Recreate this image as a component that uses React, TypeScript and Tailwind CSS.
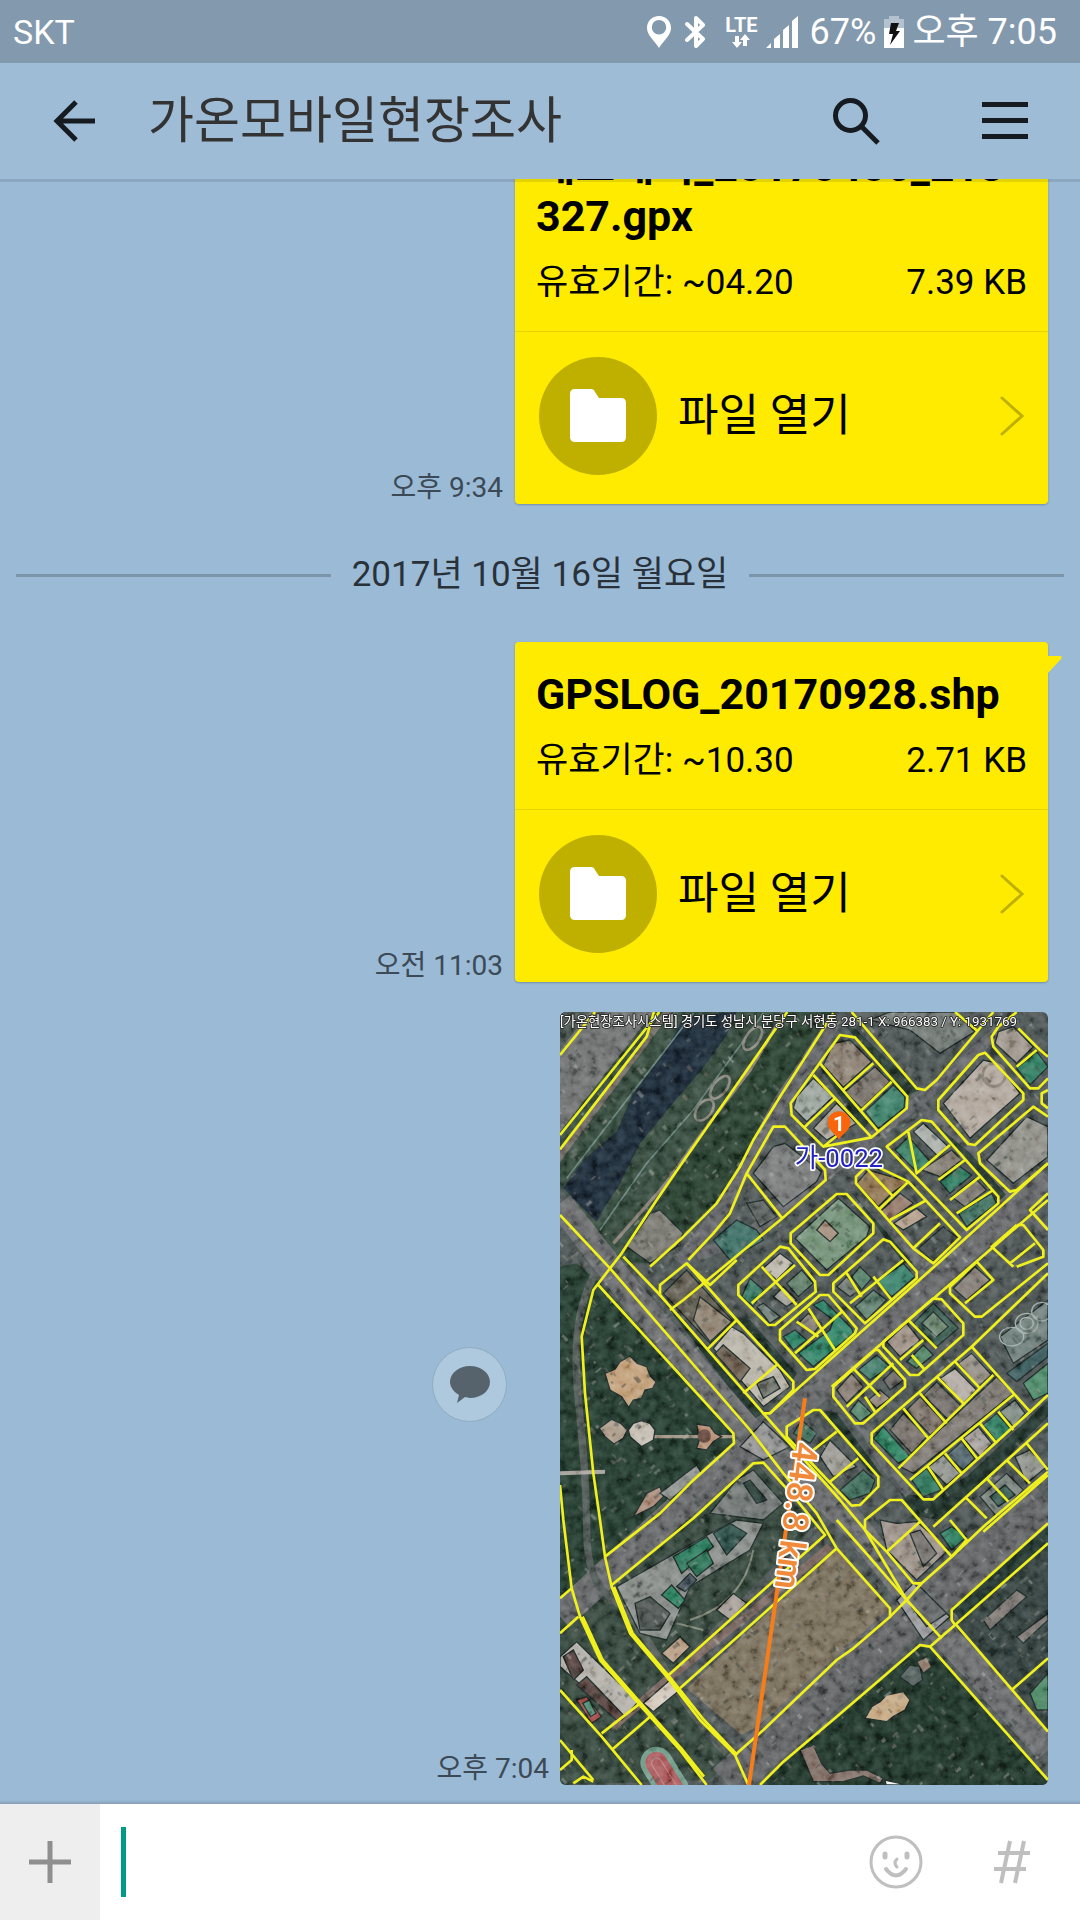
import { useState } from "react";

type FileMessageProps = {
  name: string;
  expires: string;
  size: string;
  time: string;
  tail?: boolean;
};

function StatusBar() {
  return (
    <div className="flex h-[63px] shrink-0 items-center justify-between bg-[#8399ad] pr-[23px] pl-[13px] leading-[40px] text-white">
      <span className="text-[34px]">SKT</span>
      <div className="flex items-center text-[36px]">
        <svg viewBox="0 0 24 32" className="mr-[14px] h-8 w-6" fill="#fff" aria-label="위치">
          <path
            fillRule="evenodd"
            d="M12 0C5 0 0 5 0 12c0 7 6 11 12 20 6-9 12-13 12-20C24 5 19 0 12 0Zm0 4a7 7 0 1 1 0 14.500A7 7 0 0 1 12 4Z"
          />
        </svg>
        <svg viewBox="0 0 22 34" className="mr-[18px] h-[34px] w-[22px]" fill="none" stroke="#fff" strokeWidth="4" strokeLinejoin="round" strokeLinecap="round" aria-label="블루투스">
          <path d="M2 9 18 24 11 31V3L18 10 2 25" />
        </svg>
        <span className="mr-2 flex flex-col items-center">
          <span className="text-[20px] leading-[18px] font-bold">LTE</span>
          <svg viewBox="0 0 18 14" className="h-[14px] w-[18px]" fill="#fff" aria-hidden="true">
            <path d="M3 2h4v6h3l-5 6-5-6h3ZM11 12h4V6h3l-5-6-5 6h3Z" />
          </svg>
        </span>
        <svg viewBox="0 0 32 32" className="mr-3 h-8 w-8" fill="#fff" aria-label="신호">
          <path d="M0 32 5 27v5ZM8 23l6-5v14H8ZM17 14l6-5v23h-6ZM26 5l6-5v32h-6Z" />
        </svg>
        <span>67%</span>
        <svg viewBox="0 0 20 32" className="mx-2 h-8 w-5" aria-label="배터리">
          <path d="M5 0h10v3h5v29H0V3h5Z" fill="#b4c2cf" />
          <path d="M0 12h20v20H0Z" fill="#fff" />
          <path d="M7 7h8l-3 8h4L6 29l3-11H5Z" fill="#111" />
        </svg>
        <span>오후 7:05</span>
      </div>
    </div>
  );
}

function Header() {
  return (
    <header className="flex h-[116px] shrink-0 items-center bg-[#9fbcd6] pr-[52px] pl-[53px]">
      <button type="button" aria-label="뒤로">
        <svg viewBox="0 0 42 42" className="h-[42px] w-[42px]" fill="none" stroke="#161b21" strokeWidth="5">
          <path d="M23 2 4 21l19 19M4 21h38" />
        </svg>
      </button>
      <h1 className="ml-[53px] flex-1 text-[50px] leading-[60px] text-[#333]">가온모바일현장조사</h1>
      <button type="button" aria-label="검색" className="mr-[102px]">
        <svg viewBox="0 0 47 48" className="h-12 w-[47px]" fill="none" stroke="#161b21" strokeWidth="5">
          <circle cx="17.500" cy="18.500" r="15" />
          <path d="M28 29 45 46" strokeWidth="5" />
        </svg>
      </button>
      <button type="button" aria-label="메뉴">
        <svg viewBox="0 0 46 38" className="h-[38px] w-[46px]" fill="#161b21">
          <path d="M0 0h46v5H0ZM0 16h46v5H0ZM0 32h46v5H0Z" />
        </svg>
      </button>
    </header>
  );
}

function FileMessage({ name, expires, size, time, tail }: FileMessageProps) {
  return (
    <article className="flex shrink-0 items-end justify-end gap-3 pr-8">
      <time className="text-[28px] leading-[32px] text-[#3c4a57]">{time}</time>
      <div className="relative w-[533px] rounded-[4px] bg-[#ffeb00] text-black shadow-[0_1px_2px_rgba(60,80,100,0.4)]">
        {tail && (
          <svg viewBox="0 0 14 18" className="absolute top-[14px] left-full h-[18px] w-[14px]" fill="#ffeb00" aria-hidden="true">
            <path d="M0 0h13q1 0 0 3L0 17Z" />
          </svg>
        )}
        <div className="border-b border-[#e6d400] px-[21px] pt-[27px] pb-7">
          <p className="text-[43px] leading-[50px] font-bold break-all">{name}</p>
          <div className="mt-[22px] flex justify-between text-[35px] leading-[40px]">
            <span>유효기간: ~{expires}</span>
            <span>{size}</span>
          </div>
        </div>
        <button type="button" className="flex h-[172px] w-full items-center px-6 pb-1 text-left">
          <svg viewBox="0 0 118 118" className="h-[118px] w-[118px]" aria-hidden="true">
            <circle cx="59" cy="59" r="59" fill="#bfb000" />
            <path d="M36 32h16q3 0 4 3l4 6h22q5 0 5 5v34q0 5-5 5H36q-5 0-5-5V37q0-5 5-5Z" fill="#fff" />
          </svg>
          <span className="ml-[21px] flex-1 text-[44px] leading-[48px]">파일 열기</span>
          <svg viewBox="0 0 24 40" className="h-10 w-6" fill="none" stroke="#bfb000" strokeWidth="3" strokeLinecap="round" aria-hidden="true">
            <path d="M2 2 22 20 2 38" />
          </svg>
        </button>
      </div>
    </article>
  );
}

function DateDivider({ children }: { children: string }) {
  return (
    <div className="flex h-[138px] shrink-0 items-center gap-[21px] px-4 pt-1">
      <span className="h-[3px] flex-1 bg-[#7b95aa]" />
      <span className="text-[35px] leading-[40px] text-[#29323a]">{children}</span>
      <span className="h-[3px] flex-1 bg-[#7b95aa]" />
    </div>
  );
}

/* Survey map: ground cover, roads and buildings under the parcel borders. */

const ground: [string, string][] = [
  ["#34493b", "30,36 860,36 690,290 600,470 490,620 300,790 180,790 30,560"],
  ["#6d6e6e", "30,80 60,36 310,36 30,395"],
  ["#4a5550", "30,36 120,36 30,150"],
  ["#6f6962", "30,450 340,36 365,36 30,485"],
  ["#1d2a37", "400,50 560,36 530,105 455,210 385,290 270,430 205,560 165,620 140,665 40,565 100,480 200,395 245,290 310,200 370,110"],
  ["#293f30", "712,36 850,36 690,290 600,470 490,610 390,710 310,650 375,520"],
  ["#243a2e", "30,800 80,790 150,850 550,1300 550,1330 250,1590 130,1700 30,1800"],
  ["#33443a", "30,1850 165,1670 290,1560 420,1560 620,1390 720,1500 800,1570 620,1750 350,2030 560,2260 480,2340 30,2355"],
  ["#786e5b", "860,1645 1020,1830 1015,1850 900,1950 620,2180 575,2205 410,2065"],
  ["#21352a", "630,2355 860,2150 1110,1940 1140,1945 1494,2345 1494,2355"],
  ["#33403d", "1215,1870 1494,1630 1494,2190"],
  ["#22342d", "1205,1830 1494,1570 1494,1625 1230,1860"],
  ["#27382f", "880,70 920,90 1110,270 1060,290"],
  ["#27382f", "1150,360 1260,440 1390,600 1340,600"],
  ["#22332c", "820,1230 860,1240 1000,1430 960,1420"],
  ["#22332c", "560,950 600,960 740,1120 725,1150"],
  ["#22332c", "330,890 480,1050 640,1240 610,1260"],
  ["#22332c", "1050,1480 1130,1490 1250,1430 1494,1200 1494,1250 1180,1560 1100,1550"],
  ["#22332c", "800,190 830,220 960,360 940,390"],
  ["#22332c", "900,570 960,640 1090,790 1060,790"],
];

const roads: [string, number, string][] = [
  ["#66686a", 80, "M30 610 240 880 620 1320 900 1560 1110 1825 1494 2250"],
  ["#626466", 84, "M30 1850 380 1530 610 1330 820 1150 1150 830 1494 530"],
  ["#5e6062", 120, "M530 2350 800 2100 1110 1825 1494 1500"],
  ["#606265", 44, "M850 70 690 310 590 500 500 650 390 790"],
  ["#606265", 34, "M440 770 600 700 820 530 1110 300 1350 90"],
  ["#606265", 34, "M850 400 1000 620 1110 790"],
  ["#5e6163", 34, "M840 1180 950 1290 1010 1400 1080 1480"],
  ["#5e6163", 26, "M1080 290 1150 350 1270 450 1390 590 1494 700"],
  ["#4e5753", 22, "M130 830Q60 960 85 1200T110 1590 180 1790 340 2000 530 2260"],
  ["#857c73", 10, "M690 60 600 210 470 380 340 560 190 730"],
  ["#658079", 5, "M430 40 50 535"],
  ["#658079", 5, "M640 40 430 330 290 490 150 690"],
  ["#75635c", 24, "M190 2180 350 2040 600 1840 840 1640"],
  ["#9b8f80", 10, "M310 1310H550"],
  ["#a4a09a", 12, "M30 1420 165 1415"],
  ["#7c8272", 6, "M380 1870 460 1890M420 1860Q580 1810 610 1650"],
];

const buildings: [string, string][] = [
  ["#8b7f72", "850,130 900,120 965,185 880,262 820,195"],
  ["#79736b", "975,200 1020,245 935,325 885,275"],
  ["#3f7f69", "1030,255 1065,290 1062,325 985,385 945,335"],
  ["#9ba49c", "790,235 850,290 770,365 730,325 740,290"],
  ["#a8a296", "860,310 920,370 830,420 790,385"],
  ["#777a79", "670,440 705,430 815,515 800,545 700,620 610,520"],
  ["#3d6d64", "490,720 560,660 620,690 640,720 540,780"],
  ["#595f5d", "590,610 640,600 680,650 630,680"],
  ["#6f7672", "960,60 1020,36 1215,36 1275,95 1170,160 1080,90"],
  ["#b0a69c", "1300,180 1340,190 1410,280 1260,415 1180,310"],
  ["#9c9389", "1345,95 1390,80 1450,140 1400,190 1335,130"],
  ["#2f7a5e", "1400,205 1460,155 1494,200 1440,255"],
  ["#8e8e87", "1430,350 1494,380 1494,470 1390,550 1310,480"],
  ["#3a7d64", "1075,410 1145,490 1100,515 1035,450"],
  ["#a9aea8", "1120,370 1195,440 1165,470 1090,395"],
  ["#827b71", "1205,450 1235,480 1170,530 1115,510"],
  ["#2f7a5f", "1230,500 1265,525 1200,580 1170,545"],
  ["#7b7770", "1275,535 1310,570 1245,620 1205,590"],
  ["#467464", "1325,580 1340,610 1250,680 1225,640"],
  ["#8f7552", "955,510 1075,545 1025,580 985,620 920,550"],
  ["#92796a", "1050,580 1090,610 1020,660 990,635"],
  ["#b39f8b", "1100,625 1130,650 1060,690 1030,670"],
  ["#454d4d", "1180,680 1225,715 1150,785 1105,745"],
  ["#718f75", "865,595 960,680 950,710 830,810 735,715"],
  ["#a38e7c", "825,660 865,700 840,725 800,690"],
  ["#3c7b65", "600,835 640,870 610,920 575,890"],
  ["#bcb6aa", "690,760 730,790 680,840 640,805"],
  ["#5e7b66", "755,810 790,850 745,890 710,850"],
  ["#9c9b95", "700,860 740,900 710,920 670,890"],
  ["#72817a", "640,910 690,950 660,970 620,920"],
  ["#2f8165", "820,900 905,985 910,1000 790,1100 745,1060 840,990 850,960 790,915"],
  ["#2f8165", "735,990 770,1020 730,1050 700,1010"],
  ["#837c72", "775,940 815,970 790,1000 745,970"],
  ["#747c76", "890,830 930,870 900,890 860,860"],
  ["#557f69", "930,800 965,835 935,870 905,830"],
  ["#3a806a", "1060,790 1095,830 1025,890 980,845"],
  ["#5d7c6b", "970,870 1010,900 950,960 915,920"],
  ["#3f5f53", "1150,910 1225,985 1160,1040 1090,970"],
  ["#69826c", "1150,935 1195,980 1160,1010 1115,970"],
  ["#9c8e83", "1070,970 1110,1020 1050,1070 1010,1025"],
  ["#518264", "1120,1035 1150,1065 1100,1105 1070,1085"],
  ["#837b74", "1275,800 1320,840 1250,900 1210,865"],
  ["#477d6b", "980,1065 1020,1100 960,1140 925,1110"],
  ["#857a70", "905,1120 940,1160 890,1210 860,1170"],
  ["#666360", "1030,1110 1060,1140 1020,1170 1000,1140"],
  ["#57846b", "925,1200 965,1240 930,1265 900,1235"],
  ["#948a80", "990,1170 1020,1195 980,1225 955,1200"],
  ["#2f8161", "1000,1280 1080,1370 1045,1390 970,1315"],
  ["#756e68", "1060,1240 1130,1310 1085,1360 1020,1290"],
  ["#7d7269", "1110,1190 1185,1270 1140,1305 1070,1230"],
  ["#706b66", "1160,1145 1240,1225 1195,1260 1120,1185"],
  ["#b2aba4", "1215,1105 1280,1170 1240,1210 1170,1135"],
  ["#938d84", "1265,1060 1325,1125 1285,1160 1225,1090"],
  ["#7c7771", "1340,1130 1390,1180 1090,1420 1050,1400"],
  ["#31755b", "1130,1405 1175,1470 1120,1490 1085,1440"],
  ["#8f918d", "1180,1365 1230,1420 1190,1455 1135,1400"],
  ["#52666e", "1235,1325 1275,1375 1240,1410 1190,1365"],
  ["#a49f9b", "1285,1280 1325,1330 1290,1370 1240,1315"],
  ["#327e62", "1340,1240 1385,1290 1340,1325 1300,1275"],
  ["#7f8b84", "1395,1200 1425,1240 1390,1280 1350,1235"],
  ["#6f7e7a", "1350,1010 1494,900 1494,1020 1390,1090"],
  ["#3b5a5b", "1370,1120 1494,1030 1494,1070 1400,1145"],
  ["#4b8867", "1420,1150 1494,1090 1494,1180 1450,1200"],
  ["#3d6a59", "755,1260 800,1300 780,1330 730,1300"],
  ["#9a9891", "840,1320 920,1400 850,1430 810,1370"],
  ["#3d6a59", "940,1410 975,1440 960,1480 900,1500 870,1470"],
  ["#5f5b4f", "410,810 550,965 480,1030 340,880"],
  ["#8d806f", "450,890 545,965 480,1025 430,960"],
  ["#b8b3a7", "545,980 580,1000 690,1110 720,1160 640,1220 490,1045"],
  ["#6d6052", "520,1035 600,1105 570,1145 495,1060"],
  ["#70746d", "620,1150 670,1130 690,1165 640,1195"],
  ["#c09e78", "165,1120 195,1108 210,1085 240,1068 262,1090 290,1100 302,1130 318,1145 308,1165 285,1170 275,1195 250,1200 236,1222 215,1190 180,1170"],
  ["#a99886", "148,1285 185,1258 212,1270 232,1290 220,1315 192,1332 165,1310"],
  ["#c4bdb1", "250,1270 275,1262 300,1270 315,1290 310,1320 275,1340 240,1310 235,1290"],
  ["#b68e74", "440,1272 480,1278 495,1300 515,1310 490,1325 470,1350 440,1345 448,1320"],
  ["#a98a78", "250,1550 290,1480 330,1460 340,1490 310,1520"],
  ["#8e9390", "330,1480 440,1395 455,1420 360,1500"],
  ["#6f7573", "560,1440 610,1410 700,1510 640,1560 480,1540"],
  ["#2b3f38", "580,1450 600,1440 650,1500 620,1510"],
  ["#858a87", "200,1760 480,1600 560,1560 640,1570 600,1650 420,1760 350,1920 270,1900"],
  ["#2d7a5d", "370,1670 470,1610 490,1640 395,1720"],
  ["#2f7358", "410,1690 470,1650 490,1690 440,1730"],
  ["#31534b", "490,1600 540,1570 590,1600 530,1665"],
  ["#47535c", "380,1760 420,1720 440,1740 405,1775"],
  ["#2f8262", "335,1785 365,1755 405,1800 385,1825"],
  ["#4f5552", "255,1810 300,1790 360,1840 330,1890 270,1890"],
  ["#b99d84", "335,1960 390,1910 420,1940 370,1990"],
  ["#a39b95", "500,1830 550,1780 590,1810 540,1860"],
  ["#d4c9bd", "280,2110 360,2040 390,2070 310,2135"],
  ["#b3b0a9", "30,1970 80,1925 265,2105 215,2160 30,2000"],
  ["#54403c", "110,2030 220,2145 205,2165 80,2055"],
  ["#54403c", "40,1970 70,1950 100,2010 70,2040"],
  ["#a04a44", "80,2100 110,2090 155,2150 125,2170"],
  ["#4f8a70", "98,2110 118,2100 138,2140 122,2150"],
  ["#9a9087", "990,1560 1040,1570 1100,1565 1195,1650 1100,1740 1010,1650"],
  ["#74706c", "1080,1600 1110,1590 1160,1660 1120,1700"],
  ["#2f7d5f", "1170,1600 1205,1580 1250,1610 1205,1650"],
  ["#c3a680", "945,2155 965,2120 990,2105 1010,2085 1060,2075 1080,2100 1065,2130 1030,2150 1010,2165"],
  ["#55625f", "1050,2030 1080,1995 1110,2000 1118,2040 1090,2060"],
  ["#8a7465", "1100,1985 1130,1970 1145,2000 1120,2020"],
  ["#806e65", "750,2250 790,2235 815,2290 840,2320 900,2310 950,2310 1000,2335 990,2350 940,2328 880,2345 790,2345"],
  ["#7a7470", "1300,1860 1400,1770 1430,1790 1320,1890"],
  ["#7a7470", "1400,1910 1494,1840 1494,1860 1420,1930"],
  ["#4a8562", "1440,2080 1494,2020 1494,2130 1460,2130"],
  ["#8f908f", "570,1340 640,1265 720,1340 640,1380"],
  ["#96979a", "1040,1800 1090,1750 1200,1850 1120,1920"],
  ["#626566", "1070,1800 1110,1760 1190,1840 1130,1880"],
  ["#77807a", "1290,1490 1370,1420 1420,1470 1340,1550"],
  ["#3c5c52", "1320,1490 1365,1455 1395,1485 1345,1520"],
  ["#8d9089", "1395,1370 1440,1350 1490,1400 1430,1450"],
  ["#77776f", "300,640 330,630 400,700 380,740 300,790 230,740"],
  ["#f3f3f3", "1005,2340 1070,2355 1008,2355"],
];

const parcels: string[] = [
  "M30 165 135 36M30 405 328 36M30 448 290 110 312 36",
  "M712 36 375 520 320 600 215 760 180 805",
  "M850 40 690 290 610 420 570 500 500 610 400 710 300 800",
  "M905 36 1100 265 1125 270 1160 240 1285 90 1330 36M1215 36 1285 95",
  "M870 105 915 112 1072 290 1070 325 965 412 820 440 725 345 722 310ZM810 190 985 395M790 225 965 412M970 190 880 270M1025 245 935 330M855 295 765 380M870 400 820 440",
  "M670 380 705 380 825 510 827 540 697 655 590 520ZM670 380 590 520 540 640 490 700 415 780M697 655 400 900 360 930",
  "M1305 158 1420 280 1420 300 1275 435 1255 432 1165 330 1165 300 1285 165Z",
  "M1400 36 1345 80 1325 110 1330 140 1440 265 1465 265 1494 235M1400 200 1460 150M1405 85 1470 150 1494 170M1494 270 1475 280 1475 310 1494 325",
  "M1494 350 1450 320 1285 460 1290 490 1380 575 1400 570 1494 490",
  "M1115 360 1145 365 1345 590 1345 610 1250 690 1010 440ZM1200 435 1100 520 1075 395M1245 480 1165 540M1290 530 1200 600M1330 570 1220 640",
  "M960 490 918 530 918 550 1090 745 1150 790 1230 712 1075 545ZM945 500 1030 590M1075 545 985 630M1130 600 1020 660M1170 670 1090 745",
  "M860 582 890 582 970 670 970 700 835 825 810 825 722 730 722 700Z",
  "M690 740 715 745 795 845 797 875 675 975 655 975 565 885 565 855ZM635 800 740 915M605 910 735 795",
  "M810 885 835 885 920 985 915 1000 795 1107 770 1110 690 1020 690 990ZM775 925 855 1050M740 965 805 1010M875 935 735 1060",
  "M1000 718 1020 725 1100 815 1100 835 945 970 850 875 850 850ZM890 820 935 890M970 830 1025 900M1060 780 900 910",
  "M1150 895 1175 898 1240 970 1240 1005 1105 1125 1080 1125 1000 1040 1000 1025ZM1075 960 1160 1045M1120 1020 1050 1080M1085 1065 1125 1110",
  "M1280 785 1200 860 1200 880 1275 950 1295 950 1494 790M1280 785 1330 840 1245 910",
  "M1400 675 1420 675 1480 750 1480 770 1400 800M1400 675 1325 740 1390 800M1494 580 1440 630 1494 690M1455 730 1380 790",
  "M985 1050 1065 1140 1065 1160 940 1270 915 1270 850 1190 850 1160 975 1050ZM910 1105 990 1190M1030 1090 890 1220M945 1190 975 1235",
  "M965 1300 1265 1040 1440 1235 1150 1498 1120 1498 965 1330ZM1060 1225 1135 1315M1110 1180 1190 1270M1160 1130 1245 1215M1215 1085 1290 1165M1330 1125 1045 1405M1390 1185 1080 1440M1130 1395 1180 1470M1185 1360 1235 1420M1235 1315 1285 1380M1290 1270 1340 1330M1345 1235 1390 1290",
  "M790 1230 810 1230 985 1430 985 1460 930 1515 905 1517 710 1310 710 1280ZM860 1295 790 1350M925 1375 840 1445",
  "M330 885 330 855 410 790 560 960 730 1145 730 1170 660 1240 640 1240ZM560 960 475 1045M680 1095 580 1180M410 790 480 855 560 780",
  "M220 770 330 885M660 1240 1175 780 1494 490M845 1160 1180 870 1494 600M1265 1040 1494 820M1440 1235 1494 1185",
  "M1494 1270 1150 1580M1430 1330 1494 1410M1370 1380 1440 1450M1310 1435 1375 1505M1250 1495 1310 1555M1494 1415 1300 1580 1205 1670M1494 1425 1300 1595",
  "M30 645 180 805 600 1290 700 1420 800 1540 860 1645 1020 1825 1020 1850 910 1945 860 1980 640 2190 555 2265",
  "M640 1240 710 1320 870 1500 945 1590 1070 1800 1175 1915",
  "M145 855 550 1300 552 1330 420 1450 330 1540 165 1670M180 805 130 870 95 1010 105 1180 130 1420 150 1560 165 1670 185 1760 240 1900 350 2030 450 2160 555 2265 595 2355M192 1760 248 1900 358 2030 458 2155 562 2265",
  "M30 1455 40 1560 65 1765 90 1850 150 1980 265 2110 390 2250 470 2355M98 1850 158 1980 273 2110 398 2250 462 2330",
  "M30 1795 65 1765M30 1900 85 1850M185 1755 430 1555 610 1390 640 1388 740 1500 825 1605 350 2030M390 2065 860 1645",
  "M860 1560 940 1650 1070 1800 1115 1750 1090 1750 1010 1655 945 1590 945 1560 1020 1500 1055 1500 1205 1670 1115 1750M1010 1655 1110 1565M1205 1670 1250 1620 1200 1560",
  "M630 2355 700 2285 860 2150 1000 2030 1110 1935 1140 1940 1215 1875 1494 1630M1215 1875 1205 1860 1205 1830 1494 1570M1215 1870 1494 2195M1140 1940 1494 2340M1385 2070 1494 1975M1020 1850 1070 1800",
  "M30 2070 155 2210 275 2355M155 2200 270 2110M185 2250 300 2150M30 2220 130 2340M30 2310 65 2280 65 2250M70 2350 100 2330 130 2345",
];

function seeded(seed: number) {
  let s = seed;
  return () => {
    s = (s * 16807) % 2147483647;
    return s / 2147483647;
  };
}

const rand = seeded(77);
const speckColors = ["#b5b7b2", "#1f2b28", "#7a7e7c", "#3d4744", "#8c8378", "#20302a", "#1c2923"];
const specks = Array.from({ length: 2600 }, () => ({
  x: Math.round(30 + rand() * 1464),
  y: Math.round(36 + rand() * 2319),
  w: Math.round(5 + rand() * 18),
  h: Math.round(3 + rand() * 8),
  c: speckColors[Math.floor(rand() * speckColors.length)],
}));

function AerialMap() {
  return (
    <svg
      viewBox="30 36 1464 2319"
      role="img"
      aria-label="현장조사 위성 지도"
      className="block h-auto w-[488px] rounded-[6px]"
      fontFamily="Roboto, 'Noto Sans CJK KR', sans-serif"
    >
      <defs>
        <filter id="terrain" x="0" y="0" width="100%" height="100%">
          <feTurbulence type="fractalNoise" baseFrequency="0.035" numOctaves="5" seed="8" />
          <feColorMatrix values="1.500 0 0 0 -0.350  1.500 0 0 0 -0.350  1.500 0 0 0 -0.350  0 0 0 0 1" />
        </filter>
      </defs>
      <rect x="30" y="36" width="1464" height="2319" fill="#4b5352" />
      {ground.map(([fill, points]) => (
        <polygon key={points} fill={fill} points={points} />
      ))}
      {roads.map(([stroke, width, d]) => (
        <path key={d} d={d} fill="none" stroke={stroke} strokeWidth={width} strokeLinejoin="round" />
      ))}
      <g stroke="#1b2725" strokeWidth="4">
        {buildings.map(([fill, points]) => (
          <polygon key={points} fill={fill} points={points} />
        ))}
      </g>
      <g fill="none" stroke="#87847a" strokeWidth="8">
        <ellipse cx="510" cy="262" rx="20" ry="40" transform="rotate(38 510 262)" />
        <ellipse cx="463" cy="330" rx="22" ry="36" transform="rotate(38 463 330)" />
        <ellipse cx="608" cy="115" rx="20" ry="40" transform="rotate(35 608 115)" />
        <circle cx="1332" cy="225" r="34" stroke="#8b8377" />
      </g>
      <circle cx="463" cy="1308" r="20" fill="#6a4f45" />
      <g stroke="#9eaca6" strokeWidth="4" fill="none">
        <ellipse cx="1385" cy="1010" rx="36" ry="28" />
        <ellipse cx="1430" cy="970" rx="34" ry="30" />
        <ellipse cx="1475" cy="935" rx="30" ry="28" />
        <ellipse cx="1430" cy="970" rx="20" ry="18" />
      </g>
      <g transform="rotate(-32 335 2310)">
        <rect x="285" y="2235" width="96" height="190" rx="48" fill="#6f9a88" />
        <rect x="300" y="2250" width="66" height="160" rx="33" fill="#a9585a" />
        <rect x="318" y="2270" width="30" height="120" rx="15" fill="none" stroke="#c08080" strokeWidth="3" />
      </g>
      <g opacity="0.4">
        {specks.map((s, i) => (
          <rect key={i} x={s.x} y={s.y} width={s.w} height={s.h} fill={s.c} transform={`rotate(${i % 2 ? -41 : 49} ${s.x} ${s.y})`} />
        ))}
      </g>
      <rect x="30" y="36" width="1464" height="2319" filter="url(#terrain)" className="opacity-50 mix-blend-soft-light" />
      <g fill="none" stroke="#eff01e" strokeWidth="8" strokeLinejoin="round">
        {parcels.map((d) => (
          <path key={d} d={d} />
        ))}
      </g>
      <path d="M765 1195 597 2355" stroke="#f57d1c" strokeWidth="12" />
      <text
        transform="translate(732 1322) rotate(97.500)"
        fontSize="106"
        fontWeight="500"
        fill="#f08a3a"
        stroke="#fff"
        strokeWidth="12"
        paintOrder="stroke"
        strokeLinejoin="round"
      >
        448.8 km
      </text>
      <path d="M867 334c-20 0-34 15-34 34 0 22 20 30 34 50 14-20 34-28 34-50 0-19-14-34-34-34Z" fill="#f8650a" />
      <text x="867" y="392" fontSize="62" fontWeight="700" textAnchor="middle" fill="#fff">
        1
      </text>
      <text x="734" y="500" fontSize="77" fill="#2323c4" stroke="#fff" strokeWidth="10" paintOrder="stroke" strokeLinejoin="round">
        가-0022
      </text>
      <text x="30" y="78" fontSize="40" fill="#fff" stroke="#222" strokeWidth="5" paintOrder="stroke" strokeLinejoin="round">
        [가온현장조사시스템] 경기도 성남시 분당구 서현동 281-1 X: 966383 / Y: 1931769
      </text>
    </svg>
  );
}

function PhotoMessage({ time }: { time: string }) {
  return (
    <article className="flex shrink-0 justify-end gap-[11px] pt-[30px] pr-8">
      <div className="flex flex-col items-end">
        <div className="flex flex-1 items-center pt-1 pr-[42px]">
          <button
            type="button"
            aria-label="공유"
            className="flex h-[75px] w-[75px] items-center justify-center rounded-full border border-[#8eabc2] bg-[#aec9dd]"
          >
            <svg viewBox="0 0 40 38" className="h-[38px] w-10" fill="#56636d" aria-hidden="true">
              <path d="M20 0c11 0 20 7 20 16s-9 16-20 16l-5-1-8 6 2-8C4 26 0 21 0 16 0 7 9 0 20 0Z" />
            </svg>
          </button>
        </div>
        <time className="text-[28px] leading-[32px] text-[#3c4a57]">{time}</time>
      </div>
      <AerialMap />
    </article>
  );
}

function Composer() {
  const [text, setText] = useState("");
  return (
    <footer className="flex h-[116px] shrink-0 items-center bg-white">
      <button type="button" aria-label="추가" className="flex h-full w-[100px] items-center justify-center bg-[#eee]">
        <svg viewBox="0 0 42 42" className="h-[42px] w-[42px]" stroke="#8f8f8f" strokeWidth="5">
          <path d="M21 0v42M0 21h42" />
        </svg>
      </button>
      <span className="ml-[21px] h-[70px] w-[5px] bg-[#009b85]" />
      <input
        aria-label="메시지 입력"
        value={text}
        onChange={(e) => setText(e.target.value)}
        className="h-full min-w-0 flex-1 px-2 text-[42px] outline-none"
      />
      <button type="button" aria-label="이모티콘" className="mr-[71px]">
        <svg viewBox="0 0 54 54" className="h-[54px] w-[54px]" fill="none" stroke="#bfbfbf" strokeWidth="3" strokeLinecap="round">
          <circle cx="27" cy="27" r="25" />
          <path d="M16 19v3M38 19v3" strokeWidth="5" />
          <path d="M28 24q-4 4 0 8" />
          <path d="M17 34q10 13 20 0" strokeWidth="4" />
        </svg>
      </button>
      <button type="button" aria-label="샵검색" className="mr-[50px]">
        <svg viewBox="0 0 36 44" className="h-11 w-9" fill="none" stroke="#bfbfbf" strokeWidth="4">
          <path d="M16 1 7 43M30 1 21 43M4 13h32M0 29h32" />
        </svg>
      </button>
    </footer>
  );
}

export default function App() {
  return (
    <div className="flex h-screen flex-col overflow-hidden bg-[#9bbad5] font-[Roboto,'Noto_Sans_CJK_KR',sans-serif]">
      <StatusBar />
      <Header />
      <main className="relative flex min-h-0 flex-1 flex-col justify-end overflow-hidden pb-[19px]">
        <FileMessage name="테스데이_20170406_213327.gpx" expires="04.20" size="7.39 KB" time="오후 9:34" />
        <DateDivider>2017년 10월 16일 월요일</DateDivider>
        <FileMessage name="GPSLOG_20170928.shp" expires="10.30" size="2.71 KB" time="오전 11:03" tail />
        <PhotoMessage time="오후 7:04" />
        <div className="absolute inset-x-0 top-0 h-[3px] bg-black/10" />
        <div className="absolute inset-x-0 bottom-0 h-1 bg-linear-to-b from-transparent to-black/15" />
      </main>
      <Composer />
    </div>
  );
}
